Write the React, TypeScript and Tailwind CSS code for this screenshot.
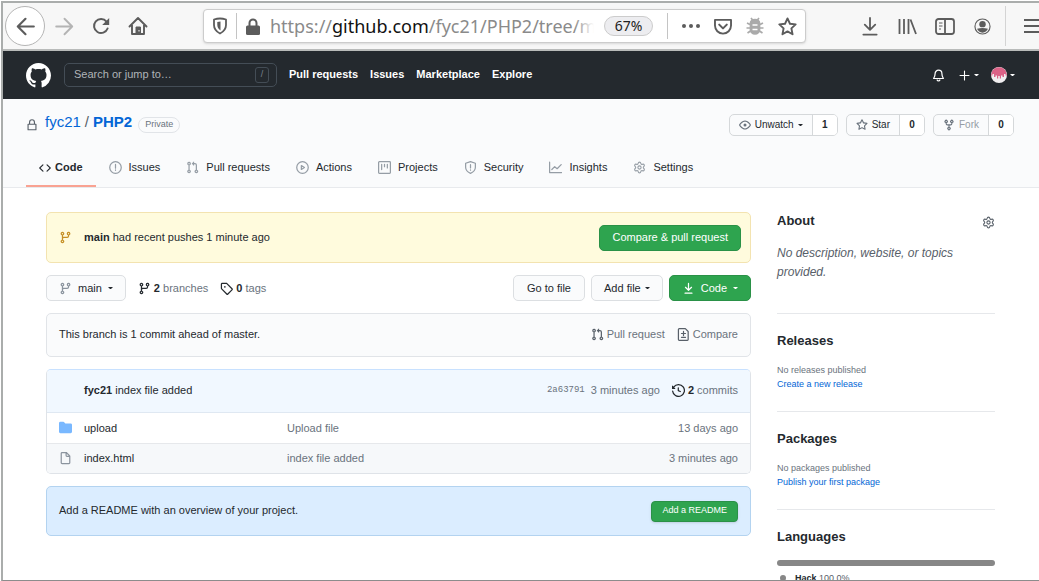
import type { ReactNode } from "react";
import { Settings } from "lucide-react";

const PATHS = {
  github:
    "M8 0C3.58 0 0 3.58 0 8c0 3.54 2.29 6.53 5.47 7.59.4.07.55-.17.55-.38 0-.19-.01-.82-.01-1.49-2.01.37-2.53-.49-2.69-.94-.09-.23-.48-.94-.82-1.13-.28-.15-.68-.52-.01-.53.63-.01 1.08.58 1.23.82.72 1.21 1.87.87 2.33.66.07-.52.28-.87.51-1.07-1.78-.2-3.64-.89-3.64-3.95 0-.87.31-1.59.82-2.15-.08-.2-.36-1.02.08-2.12 0 0 .67-.21 2.2.82.64-.18 1.32-.27 2-.27.68 0 1.36.09 2 .27 1.53-1.04 2.2-.82 2.2-.82.44 1.1.16 1.92.08 2.12.51.56.82 1.27.82 2.15 0 3.07-1.87 3.75-3.65 3.95.29.25.54.73.54 1.48 0 1.07-.01 1.93-.01 2.2 0 .21.15.46.55.38A8.013 8.013 0 0016 8c0-4.42-3.58-8-8-8z",
  code: "M4.72 3.22a.75.75 0 011.06 1.06L2.06 8l3.72 3.72a.75.75 0 11-1.06 1.06L.47 8.53a.75.75 0 010-1.06l4.25-4.25zm6.56 0a.75.75 0 10-1.06 1.06L13.94 8l-3.72 3.72a.75.75 0 101.06 1.06l4.25-4.25a.75.75 0 000-1.06l-4.25-4.25z",
  branch:
    "M11.75 2.5a.75.75 0 100 1.5.75.75 0 000-1.5zm-2.25.75a2.25 2.25 0 113 2.122V6A2.5 2.5 0 0110 8.5H6a1 1 0 00-1 1v1.128a2.251 2.251 0 11-1.5 0V5.372a2.25 2.25 0 111.5 0v1.836A2.492 2.492 0 016 7h4a1 1 0 001-1v-.628A2.25 2.25 0 019.5 3.25zM4.25 12a.75.75 0 100 1.5.75.75 0 000-1.5zM3.5 3.25a.75.75 0 111.5 0 .75.75 0 01-1.5 0z",
  pull: "M7.177 3.073L9.573.677A.25.25 0 0110 .854v4.792a.25.25 0 01-.427.177L7.177 3.427a.25.25 0 010-.354zM3.75 2.5a.75.75 0 100 1.5.75.75 0 000-1.5zm-2.25.75a2.25 2.25 0 113 2.122v5.256a2.251 2.251 0 11-1.5 0V5.372A2.25 2.25 0 011.5 3.25zM11 2.5h-1V4h1a1 1 0 011 1v5.628a2.251 2.251 0 101.5 0V5A2.5 2.5 0 0011 2.5zm1 10.25a.75.75 0 111.5 0 .75.75 0 01-1.5 0zM3.75 12a.75.75 0 100 1.5.75.75 0 000-1.5z",
  fork: "M5 3.25a.75.75 0 11-1.5 0 .75.75 0 011.5 0zm0 2.122a2.25 2.25 0 10-1.5 0v.878A2.25 2.25 0 005.75 8.5h1.5v2.128a2.251 2.251 0 101.5 0V8.5h1.5a2.25 2.25 0 002.25-2.25v-.878a2.25 2.25 0 10-1.5 0v.878a.75.75 0 01-.75.75h-4.5A.75.75 0 015 6.25v-.878zm3.75 7.378a.75.75 0 11-1.5 0 .75.75 0 011.5 0zm3-8.75a.75.75 0 100-1.5.75.75 0 000 1.5z",
  star: "M8 .25a.75.75 0 01.673.418l1.882 3.815 4.21.612a.75.75 0 01.416 1.279l-3.046 2.97.719 4.192a.75.75 0 01-1.088.791L8 12.347l-3.766 1.98a.75.75 0 01-1.088-.79l.72-4.194L.818 6.374a.75.75 0 01.416-1.28l4.21-.611L7.327.668A.75.75 0 018 .25zm0 2.445L6.615 5.5a.75.75 0 01-.564.41l-3.097.45 2.24 2.184a.75.75 0 01.216.664l-.528 3.084 2.769-1.456a.75.75 0 01.698 0l2.77 1.456-.53-3.084a.75.75 0 01.216-.664l2.24-2.183-3.096-.45a.75.75 0 01-.564-.41L8 2.694v.001z",
  eye: "M1.679 7.932c.412-.621 1.242-1.75 2.366-2.717C5.175 4.242 6.527 3.5 8 3.5c1.473 0 2.824.742 3.955 1.715 1.124.967 1.954 2.096 2.366 2.717a.119.119 0 010 .136c-.412.621-1.242 1.75-2.366 2.717C10.825 11.758 9.473 12.5 8 12.5c-1.473 0-2.824-.742-3.955-1.715C2.92 9.818 2.09 8.69 1.679 8.068a.119.119 0 010-.136zM8 2c-1.981 0-3.67.992-4.933 2.078C1.797 5.169.88 6.423.43 7.1a1.619 1.619 0 000 1.798c.45.678 1.367 1.932 2.637 3.024C4.329 13.008 6.019 14 8 14c1.981 0 3.67-.992 4.933-2.078 1.27-1.091 2.187-2.345 2.637-3.023a1.619 1.619 0 000-1.798c-.45-.678-1.367-1.932-2.637-3.023C11.671 2.992 9.981 2 8 2zm0 8a2 2 0 100-4 2 2 0 000 4z",
  tag: "M2.5 7.775V2.75a.25.25 0 01.25-.25h5.025a.25.25 0 01.177.073l6.25 6.25a.25.25 0 010 .354l-5.025 5.025a.25.25 0 01-.354 0l-6.25-6.25a.25.25 0 01-.073-.177zm-1.5 0V2.75C1 1.784 1.784 1 2.75 1h5.025c.464 0 .91.184 1.238.513l6.25 6.25a1.75 1.75 0 010 2.474l-5.026 5.026a1.75 1.75 0 01-2.474 0l-6.25-6.25A1.75 1.75 0 011 7.775zM6 5a1 1 0 100 2 1 1 0 000-2z",
  download:
    "M7.47 10.78a.75.75 0 001.06 0l3.75-3.75a.75.75 0 00-1.06-1.06L8.75 8.44V1.75a.75.75 0 00-1.5 0v6.69L4.78 5.97a.75.75 0 00-1.06 1.06l3.75 3.75zM3.75 13a.75.75 0 000 1.5h8.5a.75.75 0 000-1.5h-8.5z",
  folder:
    "M1.75 1A1.75 1.75 0 000 2.75v10.5C0 14.216.784 15 1.75 15h12.5A1.75 1.75 0 0016 13.25v-8.5A1.75 1.75 0 0014.25 3h-6.5a.25.25 0 01-.2-.1l-.9-1.2c-.33-.44-.85-.7-1.4-.7h-3.5z",
  file: "M3.75 1.5a.25.25 0 00-.25.25v11.5c0 .138.112.25.25.25h8.5a.25.25 0 00.25-.25V6H9.75A1.75 1.75 0 018 4.25V1.5H3.75zm5.75.56v2.19c0 .138.112.25.25.25h2.19L9.5 2.06zM2 1.75C2 .784 2.784 0 3.75 0h5.086c.464 0 .909.184 1.237.513l3.414 3.414c.329.328.513.773.513 1.237v8.086A1.75 1.75 0 0112.25 15h-8.5A1.75 1.75 0 012 13.25V1.75z",
  history:
    "M1.643 3.143L.427 1.927A.25.25 0 000 2.104V5.75c0 .138.112.25.25.25h3.646a.25.25 0 00.177-.427L2.715 4.215a6.5 6.5 0 11-1.18 4.458.75.75 0 10-1.493.154 8.001 8.001 0 101.6-5.684zM7.75 4a.75.75 0 01.75.75v2.992l2.028.812a.75.75 0 01-.557 1.392l-2.5-1A.75.75 0 017 8.25v-3.5A.75.75 0 017.75 4z",
};

const LINES = {
  issue: "M8 .9a7.1 7.1 0 100 14.2A7.1 7.1 0 008 .9zM8 4.2v4.6M8 11v.5",
  play: "M8 .9a7.1 7.1 0 100 14.2A7.1 7.1 0 008 .9zM6.6 5.6v4.8L10.4 8z",
  project: "M1.75.75h12.5a1 1 0 011 1v12.5a1 1 0 01-1 1H1.75a1 1 0 01-1-1V1.75a1 1 0 011-1zM4.5 4v6.5M8 4v3M11.5 4v4.5",
  shield: "M8 .8l6 2v5c0 3.3-2.3 5.9-6 7.4-3.7-1.5-6-4.1-6-7.4v-5zM8 4.5v4M8 11v.3",
  graph: "M.75 1.5v12.75H15.5M3.5 10.5L7 7l3 2.5 5-5",
  diff: "M2.75.75h7.5l3.5 3.500v10a1 1 0 01-1 1h-10a1 1 0 01-1-1V1.75a1 1 0 011-1zM8 4.250v5M5.5 6.750h5M5.5 11.5h5",
  bell: "M8 1.5A4.2 4.2 0 003.8 5.7c0 3-.6 4-1.8 6h12c-1.2-2-1.8-3-1.8-6A4.2 4.2 0 008 1.5zM6.3 13.5a1.8 1.8 0 003.4 0",
  lock: "M2.75 7h10.5v7.25H2.75zM4.75 7V4.25a3.25 3.25 0 016.5 0V7",
  plus: "M8 1.5v13M1.5 8h13",
  arrowLeft: "M15 8H1.5M8 1.5L1.5 8 8 14.5",
  arrowRight: "M1 8h13.5M8 1.5L14.5 8 8 14.5",
};

function Icon({ name, className }: { name: keyof typeof PATHS; className: string }) {
  return (
    <svg viewBox="0 0 16 16" fill="currentColor" className={`shrink-0 ${className}`} aria-hidden="true">
      <path fillRule="evenodd" d={PATHS[name]} />
    </svg>
  );
}

function Line({ name, className, width = 1.5 }: { name: keyof typeof LINES; className: string; width?: number }) {
  return (
    <svg
      viewBox="0 0 16 16"
      fill="none"
      stroke="currentColor"
      strokeWidth={width}
      strokeLinecap="round"
      strokeLinejoin="round"
      className={`shrink-0 ${className}`}
      aria-hidden="true"
    >
      <path d={LINES[name]} />
    </svg>
  );
}

function Caret() {
  return (
    <svg viewBox="0 0 5 2" className="h-[2px] w-[5px] shrink-0" fill="currentColor" aria-hidden="true">
      <path d="M0 0h5L2.500 2.500z" />
    </svg>
  );
}

function BrowserBar() {
  return (
    <div className="flex h-12 items-center border-b-2 border-[#b9bbba] bg-[#f7f7f7] pl-[2px] text-[#5c5c5c]">
      <button aria-label="Back" className="flex size-10 shrink-0 items-center justify-center rounded-full border border-[#b5b5b5] bg-white">
        <Line name="arrowLeft" className="size-[19px]" width={1.8} />
      </button>
      <button aria-label="Forward" className="ml-[10px] text-[#b4b4b4]">
        <Line name="arrowRight" className="size-[19px]" width={1.6} />
      </button>
      <button aria-label="Reload" className="ml-[18px]">
        <svg viewBox="0 0 18 18" className="size-[18px]" fill="none" stroke="currentColor" strokeWidth="2">
          <path d="M15.6 11.5A7 7 0 1114.5 4.6" strokeLinecap="round" />
          <path d="M17.2 1v7h-7z" fill="currentColor" stroke="none" />
        </svg>
      </button>
      <button aria-label="Home" className="ml-[18px]">
        <svg viewBox="0 0 20 20" className="size-5" fill="none" stroke="currentColor" strokeWidth="1.9" strokeLinejoin="round">
          <path d="M1.5 10.5L10 2l8.5 8.5M4 9v9h12V9" strokeLinecap="round" />
          <path d="M8 18v-7h4.500v7z" fill="currentColor" strokeWidth="1" />
          <path d="M10.5 14h1v1.500h-1z" fill="#fff" stroke="none" />
        </svg>
      </button>
      <div className="ml-[55px] flex h-[34px] min-w-0 flex-1 items-center rounded border border-[#ccc] bg-white px-2 shadow-sm">
        <button aria-label="Tracking protection" className="shrink-0">
          <svg viewBox="0 0 16 18" className="h-[18px] w-4" fill="none" stroke="currentColor" strokeWidth="1.8">
            <path d="M2 2.500Q8 .5 14 2.500V8c0 4-2.300 6.600-6 8.500C4.300 14.600 2 12 2 8z" strokeLinejoin="round" />
            <path d="M8.500 4.500v9C6.300 12 5.300 10.300 5.300 8V5z" fill="currentColor" stroke="none" />
          </svg>
        </button>
        <span className="ml-2 h-[26px] w-px shrink-0 bg-[#c4c4c4]" />
        <svg viewBox="0 0 14 17" className="ml-[9px] h-[17px] w-[14px] shrink-0" aria-hidden="true">
          <path d="M3.5 8V5a3.5 3.5 0 017 0v3" fill="none" stroke="currentColor" strokeWidth="2" />
          <rect y="7.5" width="14" height="9.5" rx="1.5" fill="currentColor" />
        </svg>
        <span className="relative ml-[10px] min-w-0 flex-1 overflow-hidden font-['Noto_Sans',sans-serif] text-[18px] leading-6 whitespace-nowrap text-[#8a8a8a]">
          https://<span className="text-[#111]">github.com</span>/fyc21/PHP2/tree/m
          <span className="absolute inset-y-0 right-0 w-5 bg-linear-to-r from-white/0 to-white" />
        </span>
        <button className="ml-[10px] h-5 w-[49px] shrink-0 rounded-full border border-[#ccc] bg-[#ededf0] font-['Noto_Sans',sans-serif] text-[14px] leading-[18px] text-[#222]">
          67%
        </button>
        <span className="ml-[14px] h-[26px] w-px shrink-0 bg-[#c4c4c4]" />
        <button aria-label="Page actions" className="ml-[13px] shrink-0">
          <svg viewBox="0 0 20 6" className="h-[6px] w-5" fill="currentColor">
            <circle cx="3" cy="3" r="2" />
            <circle cx="10" cy="3" r="2" />
            <circle cx="17" cy="3" r="2" />
          </svg>
        </button>
        <button aria-label="Save to Pocket" className="ml-3 shrink-0">
          <svg viewBox="0 0 20 18" className="h-[17px] w-5" fill="none" stroke="currentColor" strokeWidth="2" strokeLinecap="round" strokeLinejoin="round">
            <path d="M1.500 2h17v6a8.500 8.500 0 01-17 0z" />
            <path d="M6 7l4 4 4-4" strokeWidth="2.2" />
          </svg>
        </button>
        <button aria-label="Report issue" className="ml-[13px] shrink-0 text-[#aaa]">
          <svg viewBox="0 0 18 18" className="size-[18px]" fill="currentColor" stroke="currentColor" strokeWidth="1.7">
            <path d="M5 1l2 2.500M13 1l-2 2.500M1 6l3 1.500M17 6l-3 1.500M.5 11H4M17.500 11H14M1.500 16l3-2M16.500 16l-3-2" fill="none" />
            <path d="M4.500 6a4.500 3.500 0 019 0v6.500a4.500 4.500 0 01-9 0z" />
            <path d="M6.500 8h5M6.500 12.500h5" stroke="#fff" strokeWidth="1.300" />
          </svg>
        </button>
        <button aria-label="Bookmark" className="ml-[14px] shrink-0">
          <svg viewBox="0 0 20 20" className="size-[19px]" fill="none" stroke="currentColor" strokeWidth="2" strokeLinejoin="round">
            <path d="M10 1.500l2.600 5.600 6 .7-4.500 4.200 1.200 6.200-5.300-3.100-5.300 3.100 1.200-6.200L1.400 7.800l6-.7z" />
          </svg>
        </button>
      </div>
      <button aria-label="Downloads" className="ml-14">
        <svg viewBox="0 0 16 20" className="h-[19px] w-4" fill="none" stroke="currentColor" strokeWidth="1.9" strokeLinecap="round" strokeLinejoin="round">
          <path d="M8 1v12M2.500 8L8 13.500 13.500 8M1 18.500h14" />
        </svg>
      </button>
      <button aria-label="Library" className="ml-5">
        <svg viewBox="0 0 19 17" className="h-[17px] w-[19px]" fill="none" stroke="currentColor" strokeWidth="1.8">
          <path d="M1.500 1v15M6 1v15M10.500 1v15M12.500 1.500L18 16" />
        </svg>
      </button>
      <button aria-label="Sidebars" className="ml-[18px]">
        <svg viewBox="0 0 20 17" className="h-[17px] w-5" fill="none" stroke="currentColor" strokeWidth="1.8">
          <rect x="1" y="1" width="18" height="15" rx="2.500" />
          <path d="M10 1v15" />
          <path d="M4 5h3.500M4 8h3.500M4 11h2" strokeWidth="1.200" />
        </svg>
      </button>
      <button aria-label="Account" className="ml-[19px]">
        <svg viewBox="0 0 18 18" className="size-[17px]">
          <circle cx="9" cy="9" r="8" fill="none" stroke="currentColor" strokeWidth="1.200" />
          <circle cx="9" cy="6.500" r="3.400" fill="currentColor" />
          <path d="M3.200 11.500q5.800-2 11.600 0A6.500 6.500 0 019 15.500a6.500 6.500 0 01-5.800-4z" fill="currentColor" />
        </svg>
      </button>
      <span className="ml-[14px] h-10 w-px shrink-0 bg-[#d4d4d4]" />
      <button aria-label="Menu" className="ml-[17px]">
        <svg viewBox="0 0 16 16" className="size-4" fill="none" stroke="currentColor" strokeWidth="2">
          <path d="M1 2h15M1 8h15M1 14h15" />
        </svg>
      </button>
    </div>
  );
}

const NAV = ["Pull requests", "Issues", "Marketplace", "Explore"];

function SiteHeader() {
  return (
    <header className="flex h-12 items-center bg-[#24292e] pr-6 pl-[23px] text-white">
      <a href="#" aria-label="Homepage">
        <Icon name="github" className="size-[25px]" />
      </a>
      <div className="relative ml-[13px]">
        <input
          aria-label="Search"
          placeholder="Search or jump to…"
          className="block h-6 w-[213px] rounded-[5px] border border-[#444d56] bg-[#24292e] px-[9px] pb-[2px] text-[11px] placeholder:text-[#b0b4b8]"
        />
        <span className="absolute top-1 right-2 flex h-4 w-[14px] items-center justify-center rounded-[3px] border border-[#444d56] text-[9px] text-[#7c858e]">
          /
        </span>
      </div>
      <nav className="ml-3 flex gap-3 pb-[2px] text-[11px] font-bold">
        {NAV.map((item) => (
          <a key={item} href="#">
            {item}
          </a>
        ))}
      </nav>
      <div className="ml-auto flex items-center">
        <button aria-label="Notifications">
          <Line name="bell" className="size-[13px]" />
        </button>
        <button aria-label="Create new" className="ml-[14px] flex items-center gap-1">
          <Line name="plus" className="size-[11px]" width={1.6} />
          <Caret />
        </button>
        <button aria-label="Account menu" className="ml-3 flex items-center gap-[3px]">
          <svg viewBox="0 0 16 16" className="size-4">
            <circle cx="8" cy="8" r="8" fill="#f1eef0" />
            <path d="M1.200 4A8 8 0 0114.800 4L16 8.500h-1.500V7H13v3h-1.500V8.500H10v3H8.800V9H7.200v2.500H6v-3H4.500V10H3V7H1.500v1.500H0z" fill="#dc6287" />
          </svg>
          <Caret />
        </button>
      </div>
    </header>
  );
}

function SocialButton({ icon, label, count, caret, muted }: { icon: "eye" | "star" | "fork"; label: string; count: number; caret?: boolean; muted?: boolean }) {
  return (
    <div className="flex h-[22px] overflow-hidden rounded-[5px] border border-[#d5d8da] bg-[#fafbfc] text-[10px]">
      <button disabled={muted} className={`flex items-center gap-1 px-[9px] ${muted ? "text-[#959da5]" : "text-[#24292e]"}`}>
        <Icon name={icon} className="size-3 text-[#6a737d]" />
        <span className="pb-px">{label}</span>
        {caret && <Caret />}
      </button>
      <a href="#" className="flex w-[25px] items-center justify-center border-l border-[#d5d8da] bg-white pb-px font-bold">
        {count}
      </a>
    </div>
  );
}

const TABS: { label: string; icon: ReactNode }[] = [
  { label: "Code", icon: <Icon name="code" className="size-3" /> },
  { label: "Issues", icon: <Line name="issue" className="size-[13px] text-[#959da5]" /> },
  { label: "Pull requests", icon: <Icon name="pull" className="size-[13px] text-[#959da5]" /> },
  { label: "Actions", icon: <Line name="play" className="size-[13px] text-[#959da5]" /> },
  { label: "Projects", icon: <Line name="project" className="size-[13px] text-[#959da5]" /> },
  { label: "Security", icon: <Line name="shield" className="size-[13px] text-[#959da5]" /> },
  { label: "Insights", icon: <Line name="graph" className="size-[13px] text-[#959da5]" /> },
  { label: "Settings", icon: <Settings strokeWidth={2} className="size-[13px] text-[#959da5]" /> },
];

function RepoHead() {
  return (
    <div className="border-b border-[#e8eaed] bg-[#fafbfc] pr-[25px] pl-[23px]">
      <div className="flex h-[51px] items-center">
        <Line name="lock" className="size-3 text-[#586069]" />
        <h1 className="ml-[7px] flex gap-1 pb-1 text-[15px] text-[#0366d6]">
          <a href="#">fyc21</a>
          <span className="text-[#586069]">/</span>
          <a href="#" className="font-bold">
            PHP2
          </a>
        </h1>
        <span className="ml-[6px] rounded-full border border-[#e1e4e8] px-[6px] pb-px text-[9px] leading-[13px] text-[#6a737d]">Private</span>
        <div className="ml-auto flex gap-2">
          <SocialButton icon="eye" label="Unwatch" count={1} caret />
          <SocialButton icon="star" label="Star" count={0} />
          <SocialButton icon="fork" label="Fork" count={0} muted />
        </div>
      </div>
      <nav className="flex text-[11px]">
        {TABS.map((tab, i) => (
          <a
            key={tab.label}
            href="#"
            className={`flex h-[37px] items-center border-b-2 px-[13px] ${i === 0 ? "gap-1 border-[#f9a292] font-bold" : "gap-[7px] border-transparent"}`}
          >
            {tab.icon}
            {tab.label}
          </a>
        ))}
      </nav>
    </div>
  );
}

const FILES = [
  { name: "upload", message: "Upload file", age: "13 days ago", folder: true },
  { name: "index.html", message: "index file added", age: "3 minutes ago", folder: false },
];

function MainColumn() {
  return (
    <main className="min-w-0 flex-1 text-[11px]">
      <div className="flex h-[51px] items-center rounded-[5px] border border-[#f3e3b0] bg-[#fffbdd] pr-[9px] pl-3">
        <Icon name="branch" className="size-[13px] text-[#c69026]" />
        <p className="ml-3">
          <b>main</b> had recent pushes 1 minute ago
        </p>
        <button className="ml-auto h-[26px] rounded-[5px] border border-[#2a9147] bg-[#2ea44f] px-3 text-white">Compare &amp; pull request</button>
      </div>

      <div className="mt-3 flex items-center gap-3">
        <button className="flex h-[26px] items-center gap-[6px] rounded-[5px] border border-[#dcdfe2] bg-[#fafbfc] px-3">
          <Icon name="branch" className="size-[13px] text-[#8b949e]" />
          main
          <Caret />
        </button>
        <a href="#" className="flex items-center gap-[3px] text-[#6a737d]">
          <Icon name="branch" className="size-[13px] text-[#24292e]" />
          <span>
            <b className="text-[#24292e]">2</b> branches
          </span>
        </a>
        <a href="#" className="flex items-center gap-[3px] text-[#6a737d]">
          <Icon name="tag" className="size-[13px] text-[#24292e]" />
          <span>
            <b className="text-[#24292e]">0</b> tags
          </span>
        </a>
        <div className="ml-auto flex gap-[6px]">
          <button className="h-[26px] rounded-[5px] border border-[#dcdfe2] bg-[#fafbfc] px-[13px]">Go to file</button>
          <button className="flex h-[26px] items-center gap-1 rounded-[5px] border border-[#dcdfe2] bg-[#fafbfc] px-3">
            Add file
            <Caret />
          </button>
          <button className="flex h-[26px] items-center gap-[6px] rounded-[5px] border border-[#2a9147] bg-[#2ea44f] px-3 text-white">
            <Icon name="download" className="size-[13px]" />
            Code
            <Caret />
          </button>
        </div>
      </div>

      <div className="mt-3 flex h-11 items-center rounded-[5px] border border-[#e1e4e8] bg-[#fafbfc] px-3 pb-px">
        <p>This branch is 1 commit ahead of master.</p>
        <a href="#" className="ml-auto flex items-center gap-[3px] text-[#6a737d]">
          <Icon name="pull" className="size-[13px] text-[#586069]" />
          Pull request
        </a>
        <a href="#" className="ml-3 flex items-center gap-[3px] text-[#6a737d]">
          <Line name="diff" className="size-[13px] text-[#586069]" />
          Compare
        </a>
      </div>

      <div className="mt-3 overflow-hidden rounded-[5px] border border-[#dfe3e8] border-t-[#c8e1ff]">
        <div className="flex h-[43px] items-center border-b border-[#dfe8f2] bg-[#f1f8ff] pr-3 pb-px pl-[37px] text-[#6a737d]">
          <p className="text-[#24292e]">
            <b>fyc21</b> index file added
          </p>
          <a href="#" className="ml-auto font-['Liberation_Mono',monospace] text-[9px]">
            2a63791
          </a>
          <span className="ml-[6px]">3 minutes ago</span>
          <a href="#" className="ml-3 flex items-center gap-[3px]">
            <Icon name="history" className="size-[13px] text-[#24292e]" />
            <span>
              <b className="text-[#24292e]">2</b> commits
            </span>
          </a>
        </div>
        <table className="w-full table-fixed">
          <tbody>
            {FILES.map((file) => (
              <tr key={file.name} className="h-[30px] text-[#6a737d] even:border-t even:border-[#e6e8eb] even:bg-[#f6f8fa]">
                <td className="w-[37px] pl-3">
                  {file.folder ? <Icon name="folder" className="size-[13px] text-[#79b8ff]" /> : <Icon name="file" className="size-[13px] text-[#8b949e]" />}
                </td>
                <td className="w-[203px] text-[#24292e]">
                  <a href="#">{file.name}</a>
                </td>
                <td>
                  <a href="#">{file.message}</a>
                </td>
                <td className="w-[120px] pr-3 text-right">{file.age}</td>
              </tr>
            ))}
          </tbody>
        </table>
      </div>

      <div className="mt-3 flex h-[50px] items-center rounded-[5px] border border-[#b3d3f0] bg-[#dbedff] px-3">
        <p className="pb-[2px]">Add a README with an overview of your project.</p>
        <button className="ml-auto h-[21px] rounded border border-[#2a9147] bg-[#2ea44f] px-[10px] text-[9px] text-white shadow-sm">Add a README</button>
      </div>
    </main>
  );
}

const SECTIONS = [
  { title: "Releases", empty: "No releases published", action: "Create a new release" },
  { title: "Packages", empty: "No packages published", action: "Publish your first package" },
];

function Sidebar() {
  return (
    <aside className="w-[218px] shrink-0">
      <div className="flex h-5 items-center justify-between">
        <h2 className="pb-[2px] text-[13px] leading-[18px] font-bold">About</h2>
        <button aria-label="Edit repository details">
          <Settings strokeWidth={2} className="size-[13px] text-[#586069]" />
        </button>
      </div>
      <p className="mt-3 pb-[31px] text-[12px] leading-[19px] text-[#586069] italic">No description, website, or topics provided.</p>
      {SECTIONS.map((section) => (
        <section key={section.title} className="border-t border-[#e6e8eb] pt-[17px] pb-5">
          <h2 className="text-[13px] leading-5 font-bold">{section.title}</h2>
          <p className="mt-3 text-[9px] leading-[14px] text-[#6a737d]">{section.empty}</p>
          <a href="#" className="block text-[9px] leading-[14px] text-[#0366d6]">
            {section.action}
          </a>
        </section>
      ))}
      <section className="border-t border-[#e6e8eb] pt-[17px]">
        <h2 className="text-[13px] leading-5 font-bold">Languages</h2>
        <div className="mt-[13px] h-[6px] rounded-full bg-[#878787]" />
        <p className="mt-[5px] flex items-center gap-[9px] pl-[3px] text-[9px] leading-[14px] text-[#586069]">
          <span className="size-[6px] rounded-full bg-[#878787]" />
          <span>
            <b className="text-[#24292e]">Hack</b> 100.0%
          </span>
        </p>
      </section>
    </aside>
  );
}

export default function App() {
  return (
    <div className="h-screen bg-white pt-px pl-px font-['Liberation_Sans',Arial,sans-serif] text-[#24292e]">
      <div className="flex h-full flex-col overflow-hidden border-t-2 border-b border-l-2 border-[#aaadac] border-b-[#8c8c8c]">
        <div className="shrink-0">
          <BrowserBar />
          <SiteHeader />
          <RepoHead />
        </div>
        <div className="flex min-h-0 flex-1 gap-[26px] pt-6 pr-11 pl-[43px]">
          <MainColumn />
          <Sidebar />
        </div>
      </div>
    </div>
  );
}
